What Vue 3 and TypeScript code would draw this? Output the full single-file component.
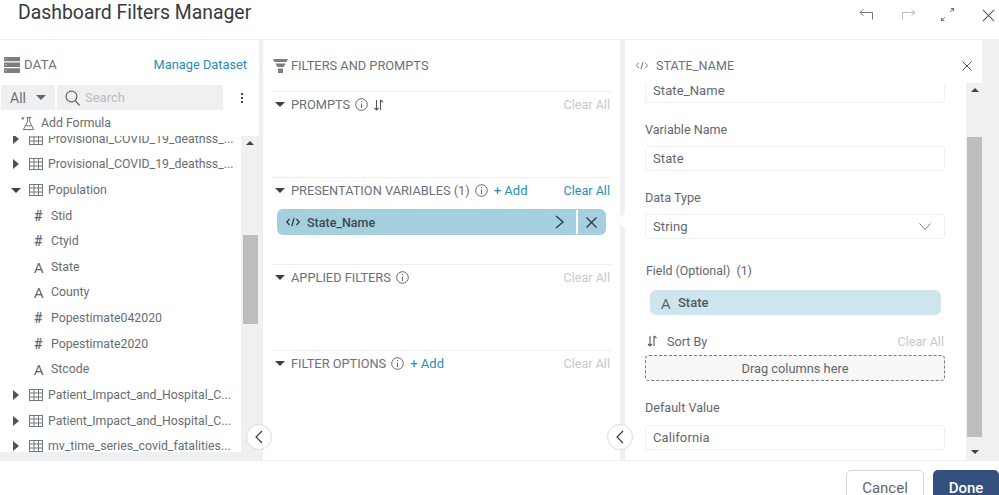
<script setup lang="ts">
interface Row { kind: 'table' | 'num' | 'text'; label: string; open?: boolean }
const rows: Row[] = [
  { kind: 'table', label: 'Provisional_COVID_19_deathss_...' },
  { kind: 'table', label: 'Provisional_COVID_19_deathss_...' },
  { kind: 'table', label: 'Population', open: true },
  { kind: 'num', label: 'Stid' },
  { kind: 'num', label: 'Ctyid' },
  { kind: 'text', label: 'State' },
  { kind: 'text', label: 'County' },
  { kind: 'num', label: 'Popestimate042020' },
  { kind: 'num', label: 'Popestimate2020' },
  { kind: 'text', label: 'Stcode' },
  { kind: 'table', label: 'Patient_Impact_and_Hospital_C...' },
  { kind: 'table', label: 'Patient_Impact_and_Hospital_C...' },
  { kind: 'table', label: 'mv_time_series_covid_fatalities...' },
]
interface Section { title: string; add?: boolean; sort?: boolean; active?: boolean }
const sections: Section[] = [
  { title: 'PROMPTS', sort: true },
  { title: 'PRESENTATION VARIABLES (1)', add: true, active: true },
  { title: 'APPLIED FILTERS' },
  { title: 'FILTER OPTIONS', add: true },
]
</script>

<template>
  <div class="app">
    <header class="top">
      <h1 class="title">Dashboard Filters Manager</h1>
      <div class="top-icons">
        <svg class="undo" width="14" height="11" viewBox="0 0 14 11" fill="none" stroke="#777" stroke-width="1"><path d="M4.500 .5 1 3.500 4.500 6.500M1 3.500H13.500V10.500" /></svg>
        <svg class="redo" width="14" height="11" viewBox="0 0 14 11" fill="none" stroke="#bbb" stroke-width="1"><path d="M9.500 .5 13 3.500 9.500 6.500M13 3.500H.5V10.500" /></svg>
        <svg class="expand" width="15" height="15" viewBox="0 0 16 16" fill="none" stroke="#777" stroke-width="1"><path d="M1.500 14.500 5.500 10.500M14.500 1.500 10.500 5.500" /><path d="M1 11v4h4zM15 5V1h-4z" fill="#777" stroke="none" /></svg>
        <svg class="close-big" width="13" height="13" viewBox="0 0 14 14" fill="none" stroke="#555" stroke-width="1.100"><path d="M1 1 13 13M13 1 1 13" /></svg>
      </div>
    </header>

    <main class="main">
      <section class="data">
        <div class="data-top">
          <div class="data-head">
            <svg width="16" height="16" viewBox="0 0 16 16"><rect x="0" y="0" width="16" height="4.300" rx="0.500" fill="#7d7d7d" /><rect x="0" y="5.500" width="16" height="4.500" rx="0.500" fill="#7d7d7d" /><rect x="0" y="11.200" width="16" height="4.800" rx="0.500" fill="#7d7d7d" /><path d="M1.500 2h1M1.500 7.700h1M1.500 13.600h1" stroke="#fff" stroke-width="1" /></svg>
            <span class="data-label">DATA</span>
            <a class="link manage">Manage Dataset</a>
          </div>
          <div class="search-row">
            <div class="all"><span>All</span><i class="tri-down dark-gray"></i></div>
            <div class="search">
              <svg width="15" height="16" viewBox="0 0 15 16" fill="none" stroke="#666" stroke-width="1.200"><circle cx="6.500" cy="6.500" r="5.400" /><path d="M10.300 10.600 14.500 15.500" /></svg>
              <span>Search</span>
            </div>
            <div class="kebab"><i></i><i></i><i></i></div>
          </div>
          <div class="formula">
            <svg width="15" height="15" viewBox="0 0 15 16" fill="none" stroke="#666" stroke-width="1"><path d="M5.500 1.500h5M6.500 1.500V6L2 14.500h11L8.800 6V1.500M0 2.500h3M1.500 1v3M4.500 10.500h6" /></svg>
            <span>Add Formula</span>
          </div>
        </div>
        <div class="tree-wrap">
          <div class="tree">
            <div class="tree-inner">
              <div v-for="(r, i) in rows" :key="i" class="row" :class="{ leaf: r.kind !== 'table' }">
                <template v-if="r.kind === 'table'">
                  <i :class="r.open ? 'tri-down' : 'tri-right'"></i>
                  <svg class="grid-ic" width="14" height="12" viewBox="0 0 14 12" fill="none" stroke="#6f7780" stroke-width="1"><rect x="0.500" y="0.500" width="13" height="11" /><path d="M0.500 4H13.500M0.500 8H13.500M5 .5V11.500M9.500 .5V11.500" /></svg>
                </template>
                <span v-else-if="r.kind === 'num'" class="glyph">#</span>
                <span v-else class="glyph a">A</span>
                <span class="row-label">{{ r.label }}</span>
              </div>
            </div>
          </div>
          <div class="bar">
            <i class="arrow-up"></i>
            <div class="thumb left-thumb"></div>
          </div>
        </div>
      </section>

      <section class="filters">
        <div class="filters-head">
          <svg width="15" height="14" viewBox="0 0 15 14" fill="#7d7d7d"><path d="M0 0h15l-1.500 3H1.500zM2.300 4.500h10.400L10.500 8h-6zM5 9.500h5V14H5z" /></svg>
          <span>FILTERS AND PROMPTS</span>
        </div>
        <div v-for="s in sections" :key="s.title" class="sec">
          <div class="sec-head">
            <i class="tri-down"></i>
            <span class="sec-title">{{ s.title }}</span>
            <svg class="info" width="13" height="13" viewBox="0 0 13 13" fill="none" stroke="#666" stroke-width="1"><circle cx="6.500" cy="6.500" r="5.800" /><path d="M6.500 5.500V10M6.500 3V4.200" /></svg>
            <svg v-if="s.sort" class="sort" width="12" height="12" viewBox="0 0 11 12" fill="none" stroke="#555" stroke-width="1.100"><path d="M3 1V11M1 9l2 2 2-2M7 11V1M7 1l2.500 2" /></svg>
            <a v-if="s.add" class="link add">+ Add</a>
            <a class="clear" :class="{ on: s.active }">Clear All</a>
          </div>
          <div v-if="s.active" class="var-chip">
            <svg width="14" height="10" viewBox="0 0 14 10" fill="none" stroke="#333" stroke-width="1.200"><path d="M3.500 2 .8 5l2.700 3M10.500 2 13.200 5l-2.700 3M8.200 1 5.800 9" /></svg>
            <span class="var-name">State_Name</span>
            <svg class="chev" width="9" height="14" viewBox="0 0 9 14" fill="none" stroke="#333" stroke-width="1.300"><path d="M1 1 8 7 1 13" /></svg>
            <span class="var-div"></span>
            <svg class="var-x" width="11" height="11" viewBox="0 0 11 11" fill="none" stroke="#333" stroke-width="1.200"><path d="M.5.5l10 10M10.500.5l-10 10" /></svg>
          </div>
        </div>
        <i class="notch"></i>
        <button class="collapse c1"><svg width="8" height="14" viewBox="0 0 8 14" fill="none" stroke="#333" stroke-width="1.100"><path d="M7 1 1 7l6 6" /></svg></button>
        <button class="collapse c2"><svg width="8" height="14" viewBox="0 0 8 14" fill="none" stroke="#333" stroke-width="1.100"><path d="M7 1 1 7l6 6" /></svg></button>
      </section>

      <section class="detail">
        <div class="detail-head">
          <svg width="14" height="9" viewBox="0 0 14 10" fill="none" stroke="#666" stroke-width="1"><path d="M3.500 2 .8 5l2.700 3M10.500 2 13.200 5l-2.700 3M8.200 1 5.800 9" /></svg>
          <span>STATE_NAME</span>
          <svg class="head-x" width="10" height="10" viewBox="0 0 10 10" fill="none" stroke="#555" stroke-width="1"><path d="M.5.5l9 9M9.500.5l-9 9" /></svg>
        </div>
        <div class="detail-body">
          <div class="form">
            <div class="input first">State_Name</div>
            <label class="lbl l-var">Variable Name</label>
            <div class="input">State</div>
            <label class="lbl l-type">Data Type</label>
            <div class="input select">String
              <svg width="12" height="7" viewBox="0 0 12 7" fill="none" stroke="#777" stroke-width="1"><path d="M.5.5 6 6.500 11.500.5" /></svg>
            </div>
            <label class="lbl l-field">Field (Optional)&nbsp; (1)</label>
            <div class="field-chip"><span class="glyph a">A</span><span class="fc-name">State</span></div>
            <div class="sort-row">
              <svg width="11" height="12" viewBox="0 0 11 12" fill="none" stroke="#555" stroke-width="1.100"><path d="M3 1V11M1 9l2 2 2-2M7 11V1M7 1l2.500 2" /></svg>
              <span class="sort-by">Sort By</span>
              <a class="clear">Clear All</a>
            </div>
            <div class="drop">Drag columns here</div>
            <label class="lbl l-default">Default Value</label>
            <div class="input">California</div>
          </div>
          <div class="bar">
            <i class="arrow-up"></i>
            <div class="thumb right-thumb"></div>
            <i class="arrow-down"></i>
          </div>
        </div>
      </section>
    </main>

    <footer class="foot">
      <button class="btn cancel">Cancel</button>
      <button class="btn done">Done</button>
    </footer>
  </div>
</template>

<style>
html, body { margin: 0; overflow: hidden; background: #fff; }
</style>

<style scoped>
.app { width: 999px; height: 495px; overflow: hidden; display: flex; flex-direction: column; font-family: Roboto, "Liberation Sans", sans-serif; color: #5f6770; background: #fff; }
.top { height: 39px; flex: none; display: flex; align-items: center; padding-left: 18px; border-bottom: 1px solid #eceef0; box-sizing: content-box; }
.title { margin: -15px 0 0; font-size: 19.400px; font-weight: 400; color: #343a40; }
.top-icons { margin-left: auto; width: 141px; height: 39px; display: flex; align-items: flex-start; }
.undo { margin: 9px 0 0 1px; }
.redo { margin: 9px 0 0 29px; }
.expand { margin: 7px 0 0 24px; }
.close-big { margin: 9px 0 0 27px; }

.main { height: 420px; flex: none; display: flex; background: #eff0f2; border-bottom: 1px solid #eceef0; }

.data { width: 259px; flex: none; height: 412px; background: #fff; display: flex; flex-direction: column; }
.data-top { height: 96px; flex: none; background: #fff; }
.data-head { height: 45px; display: flex; align-items: center; padding: 4px 0 0 4px; box-sizing: border-box; }
.data-label { margin-left: 4px; font-size: 13px; color: #69727a; letter-spacing: 0.3px; }
.link { color: #1f8fb5; font-size: 13px; }
.manage { margin-left: auto; margin-right: 12px; font-size: 12.800px; }
.search-row { height: 25px; display: flex; align-items: center; margin-left: 1px; }
.all { width: 54px; height: 25px; background: #eff0f2; display: flex; align-items: center; padding-left: 9px; box-sizing: border-box; font-size: 14px; gap: 10px; color: #6a7178; }
.search { width: 166px; margin-left: 2px; height: 25px; background: #eff0f2; display: flex; align-items: center; padding-left: 8px; box-sizing: border-box; gap: 5px; font-size: 13px; color: #b9bdc1; }
.kebab { margin-left: 18px; display: flex; flex-direction: column; gap: 2px; }
.kebab i { width: 2px; height: 2px; background: #444; display: block; }
.formula { height: 26px; display: flex; align-items: center; padding-left: 21px; gap: 5px; font-size: 12.300px; color: #666d73; }

.tree-wrap { flex: 1; min-height: 0; display: flex; }
.tree { width: 241px; flex: none; overflow: hidden; background: #fff; }
.tree-inner { margin-top: -10px; }
.row { height: 25.620px; display: flex; align-items: center; padding-left: 12px; font-size: 12.300px; color: #666d73; }
.row.leaf { padding-left: 34px; }
.grid-ic { margin-left: 9px; flex: none; }
.row-label { margin-left: 5px; white-space: nowrap; }
.leaf .row-label { margin-left: 0; }
.glyph { width: 17px; flex: none; font-size: 14px; font-weight: 500; color: #5f6770; }
.glyph.a { font-family: "Open Sans", Roboto, sans-serif; font-weight: 400; font-size: 15px; color: #5a626a; }
.tri-down { width: 0; height: 0; border-left: 5px solid transparent; border-right: 5px solid transparent; border-top: 5px solid #3b4147; display: block; flex: none; }
.tri-down.dark-gray { border-top-color: #5f6770; }
.tri-right { width: 0; height: 0; margin-left: 1px; margin-right: 1px; border-top: 5px solid transparent; border-bottom: 5px solid transparent; border-left: 6px solid #4c5359; display: block; flex: none; }
.row .tri-down + .grid-ic { margin-left: 8px; }
.row .tri-down { margin-left: -1px; }

.bar { width: 17px; flex: none; background: #eff0f2; position: relative; }
.data .bar { width: 18px; }
.arrow-up { position: absolute; left: 5px; top: 5px; width: 0; height: 0; border-left: 4px solid transparent; border-right: 4px solid transparent; border-bottom: 4px solid #3b4147; }
.arrow-down { position: absolute; left: 5px; bottom: 6px; width: 0; height: 0; border-left: 4px solid transparent; border-right: 4px solid transparent; border-top: 4px solid #3b4147; }
.thumb { position: absolute; left: 1px; width: 15px; background: #bdbdbd; }
.left-thumb { top: 99px; height: 89px; left: 2px; }
.right-thumb { top: 54px; height: 300px; }

.filters { width: 357px; flex: none; margin-left: 4px; margin-right: 5px; background: #fff; padding: 0 9px; box-sizing: border-box; position: relative; }
.filters-head { height: 51px; display: flex; align-items: center; gap: 3px; font-size: 12.800px; color: #69727a; margin-left: 1px; }
.sec { height: 86.300px; border-top: 1px solid #eceef0; box-sizing: border-box; }
.sec-head { height: 25px; display: flex; align-items: center; padding-left: 3px; font-size: 12.800px; color: #69727a; }
.sec-title { margin-left: 6px; }
.info { margin-left: 5px; flex: none; }
.sort { margin-left: 5px; }
.add { margin-left: 6px; }
.clear { margin-left: auto; margin-right: 1px; font-size: 12.600px; color: #c6c9cc; }
.clear.on { color: #1f8fb5; }
.var-chip { margin: 6px 5px 0; height: 26px; background: #a3cfdf; border-radius: 6px; display: flex; align-items: center; padding-left: 9px; }
.var-name { margin-left: 7px; font-size: 12.500px; font-weight: 500; color: #3f474e; }
.chev { margin-left: auto; margin-right: -1px; }
.var-div { width: 2px; height: 24px; background: #fff; margin-left: 13px; }
.var-x { margin-left: 8px; margin-right: 9px; }
.notch { position: absolute; right: -5px; top: 173px; width: 0; height: 0; border-top: 8px solid transparent; border-bottom: 8px solid transparent; border-right: 8px solid #fff; }
.collapse { position: absolute; top: 384px; width: 26px; height: 26px; border-radius: 50%; border: 1px solid #dcdcdc; background: #fff; padding: 0; display: flex; align-items: center; justify-content: center; }
.c1 { left: -17px; }
.c2 { left: 344px; }

.detail { width: 357px; flex: none; display: flex; flex-direction: column; background: #fff; }
.detail-head { height: 43px; flex: none; display: flex; align-items: center; padding: 8px 0 0 10px; box-sizing: border-box; gap: 7px; font-size: 12.500px; color: #69727a; letter-spacing: 0.1px; }
.head-x { margin-left: auto; margin-right: 10px; }
.detail-body { flex: 1; min-height: 0; display: flex; }
.form { width: 341px; flex: none; padding: 0 21px 0 20px; box-sizing: border-box; overflow: hidden; font-size: 12.600px; color: #5f6770; }
.input { height: 25px; border: 1px solid #eeeff1; border-radius: 3px; padding-left: 7px; display: flex; align-items: center; box-sizing: border-box; font-size: 13px; color: #5f6770; letter-spacing: 0.1px; }
.input.first { height: 20px; border-top: none; padding-bottom: 4px; }
.select { justify-content: space-between; padding-right: 13px; }
.lbl { display: flex; align-items: center; box-sizing: border-box; }
.l-var { height: 43px; padding-top: 10px; }
.l-type { height: 43px; padding-top: 10px; }
.l-field { height: 51px; padding-top: 11px; margin-left: 1px; font-size: 12.400px; }
.field-chip { margin: 0 4px 0 5px; height: 25px; background: #cfe5ed; border-radius: 6px; display: flex; align-items: center; padding-left: 11px; }
.fc-name { font-size: 13px; font-weight: 500; color: #4f575e; }
.field-chip .glyph { width: 17px; }
.sort-row { height: 40px; display: flex; align-items: center; padding-top: 12px; box-sizing: border-box; margin-left: 2px; }
.sort-by { margin-left: 9px; }
.drop { height: 26px; border: 1px dashed #7d7d7d; border-radius: 4px; background: #f7f7f7; display: flex; align-items: center; justify-content: center; box-sizing: border-box; font-size: 12.800px; }
.l-default { height: 44px; padding-top: 9px; }

.foot { flex: 1; display: flex; justify-content: flex-end; align-items: flex-start; padding-top: 9px; gap: 9px; }
.btn { width: 78px; height: 40px; border-radius: 5px; font-family: inherit; font-size: 15px; padding: 0 0 5px; }
.cancel { background: #fff; border: 1px solid #d5d7d9; color: #5f6770; }
.done { width: 66px; background: #34507e; border: none; color: #fff; font-weight: 500; }
</style>
